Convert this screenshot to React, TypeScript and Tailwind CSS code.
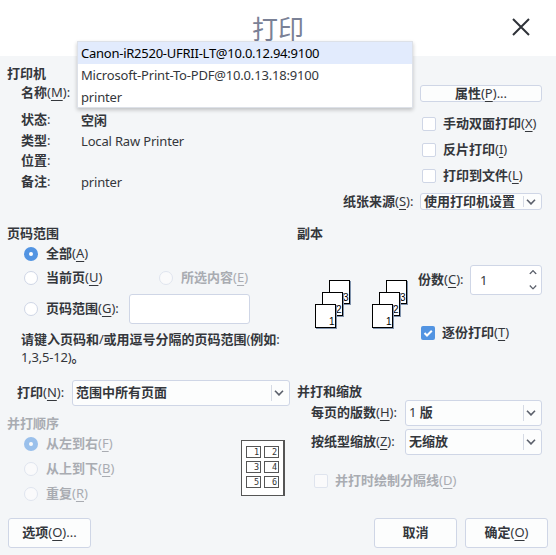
import type { ReactNode } from 'react';

const CJK = "font-['Noto_Sans_CJK_SC','Noto_Sans',sans-serif] font-bold leading-none tracking-normal";

function Zh({ children }: { children: ReactNode }) {
  return <span className={CJK}>{children}</span>;
}

type LabelProps = { zh: string; hotkey?: string; tail?: string; className?: string };

function Label({ zh, hotkey, tail = '', className = '' }: LabelProps) {
  return (
    <span className={`block whitespace-nowrap pb-[2px] leading-5 ${className}`}>
      <Zh>{zh}</Zh>
      {hotkey && (
        <>
          (<span className="underline decoration-1 underline-offset-[3px]">{hotkey}</span>)
        </>
      )}
      {tail}
    </span>
  );
}

function Title({ children, className = '' }: { children: string; className?: string }) {
  return (
    <h2 className={`flex h-5 items-center whitespace-nowrap pb-[3px] leading-5 ${className}`}>
      <Zh>{children}</Zh>
    </h2>
  );
}

function Radio({ checked = false, disabled = false }: { checked?: boolean; disabled?: boolean }) {
  return (
    <span
      className={`flex size-[14px] shrink-0 items-center justify-center rounded-full ${
        checked ? 'bg-[#5294e2]' : 'border border-[#cfd6e6] bg-white'
      } ${disabled ? 'opacity-55' : ''}`}
    >
      {checked && <span className="size-1 rounded-full bg-white" />}
    </span>
  );
}

function Check({ checked = false, disabled = false }: { checked?: boolean; disabled?: boolean }) {
  return (
    <span
      className={`flex size-[14px] shrink-0 items-center justify-center rounded-[2px] ${
        checked ? 'bg-[#5294e2]' : 'border border-[#cfd6e6] bg-white'
      } ${disabled ? 'opacity-55' : ''}`}
    >
      {checked && (
        <svg viewBox="0 0 14 14" className="size-[14px]" fill="none" stroke="#fff" strokeWidth="2">
          <path d="M3.5 7 L6 9.5 L10.8 4.7" />
        </svg>
      )}
    </span>
  );
}

function Chevron({ up = false }: { up?: boolean }) {
  return (
    <svg
      viewBox="0 0 10 6"
      className={`h-[6px] w-[10px] shrink-0 ${up ? 'rotate-180' : ''}`}
      fill="none"
      stroke="#5c616c"
      strokeWidth="1.6"
    >
      <path d="M1 .7 L5 4.9 L9 .7" />
    </svg>
  );
}

function Select({ children, className }: { children: ReactNode; className: string }) {
  return (
    <div
      className={`flex shrink-0 items-center rounded-[3px] border border-[#cfd6e6] bg-[#fcfdfd] pl-[3px] pr-[5px] ${className}`}
    >
      <span className="flex-1 whitespace-nowrap pb-[2px] leading-5">{children}</span>
      <span className="mr-[2px] h-4 max-h-[70%] w-px bg-[#d5dae4]" />
      <Chevron />
    </div>
  );
}

function Button({ children, className }: { children: ReactNode; className: string }) {
  return (
    <button
      className={`flex shrink-0 items-center justify-center rounded-[3px] border border-[#cfd6e6] bg-[#fcfdfd] ${className}`}
    >
      {children}
    </button>
  );
}

function Info({ name, value, className = '' }: { name: string; value?: ReactNode; className?: string }) {
  return (
    <div className={`flex h-5 items-center pl-[21px] ${className}`}>
      <Label zh={name} tail=":" className="w-[60px]" />
      <span className="leading-5 tracking-[-0.17px]">{value}</span>
    </div>
  );
}

function CollateIcon() {
  const sheets = [
    { x: 14, y: 0, n: 3 },
    { x: 7, y: 12, n: 2 },
    { x: 0, y: 24, n: 1 },
  ];
  return (
    <svg viewBox="0 0 36 49" className="h-[49px] w-9" shapeRendering="crispEdges">
      {sheets.map((s) => (
        <g key={s.n}>
          <rect x={s.x + 1} y={s.y + 1} width="21" height="24" fill="#8093ad" />
          <rect x={s.x + 0.5} y={s.y + 0.5} width="20" height="23" fill="#fff" stroke="#000" />
          <text x={s.x + 14} y={s.y + 21} fontSize="10" fill="#000" fontFamily="Liberation Sans, sans-serif">
            {s.n}
          </text>
        </g>
      ))}
    </svg>
  );
}

function OrderIcon() {
  return (
    <svg viewBox="0 0 44 56" className="h-14 w-11" shapeRendering="crispEdges">
      <rect x="0" y="0" width="44" height="56" fill="#555" />
      <rect x="1" y="1" width="41" height="54" fill="#fff" />
      {[1, 2, 3, 4, 5, 6].map((n, i) => {
        const x = 5 + (i % 2) * 18;
        const y = 6 + Math.floor(i / 2) * 15;
        return (
          <g key={n}>
            <rect x={x + 0.5} y={y + 0.5} width="14" height="11" fill="#fff" stroke="#555" />
            <text x={x + 8} y={y + 9} fontSize="8.5" fill="#333" fontFamily="DejaVu Sans Mono, monospace">
              {n}
            </text>
          </g>
        );
      })}
    </svg>
  );
}

export default function App() {
  return (
    <div className="relative flex h-[555px] w-[556px] flex-col overflow-hidden bg-[#f4f6f8] font-['Noto_Sans','Noto_Sans_CJK_SC',sans-serif] text-[13px] text-[#34373c]">
      <header className="flex h-14 shrink-0 items-center justify-center bg-white">
        <h1 className="font-['Noto_Sans_CJK_SC',sans-serif] text-[26px] leading-none text-[#7a8196]">打印</h1>
        <svg viewBox="0 0 18 18" className="absolute right-[26px] top-[17.5px] size-[18px]" stroke="#2e3238" strokeWidth="2">
          <path d="M1 1 L17 17 M17 1 L1 17" />
        </svg>
      </header>

      <main className="flex h-[448px] shrink-0">
        <div className="flex w-[297px] shrink-0 flex-col">
          <Title className="mt-2 pl-[7px]">打印机</Title>
          <div className="flex h-[18px] items-center pl-[21px]">
            <Label zh="名称" hotkey="M" tail=":" />
          </div>
          <Info className="mt-2" name="状态" value={<Zh>空闲</Zh>} />
          <Info className="mt-px" name="类型" value="Local Raw Printer" />
          <Info name="位置" />
          <Info className="mt-px" name="备注" value="printer" />

          <Title className="mt-8 pl-[7px]">页码范围</Title>
          <div className="flex h-5 items-center gap-2 pl-6">
            <Radio checked />
            <Label zh="全部" hotkey="A" />
          </div>
          <div className="mt-1 flex h-5 items-center pl-6">
            <div className="flex w-[135px] items-center gap-2">
              <Radio />
              <Label zh="当前页" hotkey="U" />
            </div>
            <div className="flex items-center gap-2 text-[#a9acb2]">
              <Radio disabled />
              <Label zh="所选内容" hotkey="E" />
            </div>
          </div>
          <div className="mt-[6px] flex h-[30px] items-center pl-6">
            <div className="flex w-[105px] items-center gap-2">
              <Radio />
              <Label zh="页码范围" hotkey="G" tail=":" />
            </div>
            <div className="h-[30px] w-[121px] rounded-[3px] border border-[#cfd6e6] bg-white" />
          </div>
          <p className="mt-[5px] h-5 whitespace-nowrap pl-[21px] leading-5 tracking-[-0.3px]">
            <Zh>请键入页码和</Zh>/<Zh>或用逗号分隔的页码范围</Zh>(<Zh>例如</Zh>:
          </p>
          <p className="-mt-px h-[18px] whitespace-nowrap pl-[21px] leading-[18px] tracking-[-0.2px]">
            1,3,5-12)<Zh>。</Zh>
          </p>

          <div className="mt-[14px] flex h-[26px] items-center pl-[17px]">
            <Label zh="打印" hotkey="N" tail=":" className="w-[55px]" />
            <Select className="h-[26px] w-[218px]">
              <Zh>范围中所有页面</Zh>
            </Select>
          </div>

          <div className="text-[#a9acb2]">
            <Title className="mt-2 pl-[7px]">并打顺序</Title>
            <div className="flex pl-6">
              <div className="flex w-[217px] flex-col gap-[5px]">
                <div className="flex h-5 items-center gap-2">
                  <Radio checked disabled />
                  <Label zh="从左到右" hotkey="F" />
                </div>
                <div className="flex h-5 items-center gap-2">
                  <Radio disabled />
                  <Label zh="从上到下" hotkey="B" />
                </div>
                <div className="flex h-5 items-center gap-2">
                  <Radio disabled />
                  <Label zh="重复" hotkey="R" />
                </div>
              </div>
              <div className="pt-[6px]">
                <OrderIcon />
              </div>
            </div>
          </div>
        </div>

        <div className="flex w-[259px] flex-col">
          <Button className="ml-[123px] mt-[29px] h-[17px] w-[122px]">
            <Label zh="属性" hotkey="P" tail="..." />
          </Button>
          <div className="mt-3 flex flex-col gap-[6px] pl-[125px]">
            <div className="flex h-5 items-center gap-[7px]">
              <Check />
              <Label zh="手动双面打印" hotkey="X" />
            </div>
            <div className="flex h-5 items-center gap-[7px]">
              <Check />
              <Label zh="反片打印" hotkey="I" />
            </div>
            <div className="flex h-5 items-center gap-[7px]">
              <Check />
              <Label zh="打印到文件" hotkey="L" />
            </div>
          </div>
          <div className="mt-[7px] flex h-[17px] items-center pl-[46px]">
            <Label zh="纸张来源" hotkey="S" tail=":" className="w-[77px]" />
            <Select className="h-[17px] w-[122px]">
              <Zh>使用打印机设置</Zh>
            </Select>
          </div>

          <Title className="mt-[14px]">副本</Title>
          <div className="flex h-[137px]">
            <div className="flex w-[121px] gap-[21px] pl-[18px] pt-9">
              <CollateIcon />
              <CollateIcon />
            </div>
            <div className="flex flex-col pt-[21px]">
              <div className="flex h-[30px] items-center">
                <Label zh="份数" hotkey="C" tail=":" className="w-[52px]" />
                <div className="flex h-[30px] w-[72px] items-center justify-between rounded-[3px] border border-[#cfd6e6] bg-white pl-[9px] pr-[3px]">
                  <span className="leading-5">1</span>
                  <span className="flex scale-[0.8] flex-col gap-[13px] pb-[2px]">
                    <Chevron up />
                    <Chevron />
                  </span>
                </div>
              </div>
              <div className="mt-7 flex h-5 items-center gap-[7px] pl-[3px]">
                <Check checked />
                <Label zh="逐份打印" hotkey="T" />
              </div>
            </div>
          </div>

          <Title className="mt-px">并打和缩放</Title>
          <div className="-mt-[2px] flex h-[26px] items-center pl-[14px]">
            <Label zh="每页的版数" hotkey="H" tail=":" className="w-[94px]" />
            <Select className="h-[26px] w-[137px]">
              1 <Zh>版</Zh>
            </Select>
          </div>
          <div className="mt-[3px] flex h-[26px] items-center pl-[14px]">
            <Label zh="按纸型缩放" hotkey="Z" tail=":" className="w-[94px]" />
            <Select className="h-[26px] w-[137px]">
              <Zh>无缩放</Zh>
            </Select>
          </div>
          <div className="mt-4 flex h-5 items-center gap-[7px] pl-[17px] text-[#a9acb2]">
            <Check disabled />
            <Label zh="并打时绘制分隔线" hotkey="D" />
          </div>
        </div>
      </main>

      <footer className="mt-[14px] flex h-[30px] shrink-0 gap-2 px-2">
        <Button className="mr-auto w-[83px]">
          <Label zh="选项" hotkey="O" tail="..." />
        </Button>
        <Button className="w-[83px]">
          <Label zh="取消" />
        </Button>
        <Button className="w-[83px]">
          <Label zh="确定" hotkey="O" />
        </Button>
      </footer>

      <ul className="absolute left-[77px] top-[41px] h-[67px] w-[336px] border border-[#dde1e8] bg-white shadow-[0_2px_4px_rgba(0,0,0,0.22)]">
        <li className="h-[22px] whitespace-nowrap bg-[#e2ebfd] pl-[3px] leading-[22px] tracking-[-0.25px] text-black">
          Canon-iR2520-UFRII-LT@10.0.12.94:9100
        </li>
        <li className="h-[22px] whitespace-nowrap pl-[3px] leading-[22px] tracking-[-0.18px]">
          Microsoft-Print-To-PDF@10.0.13.18:9100
        </li>
        <li className="h-[22px] pl-[3px] leading-[22px] tracking-[-0.17px]">printer</li>
      </ul>
    </div>
  );
}
